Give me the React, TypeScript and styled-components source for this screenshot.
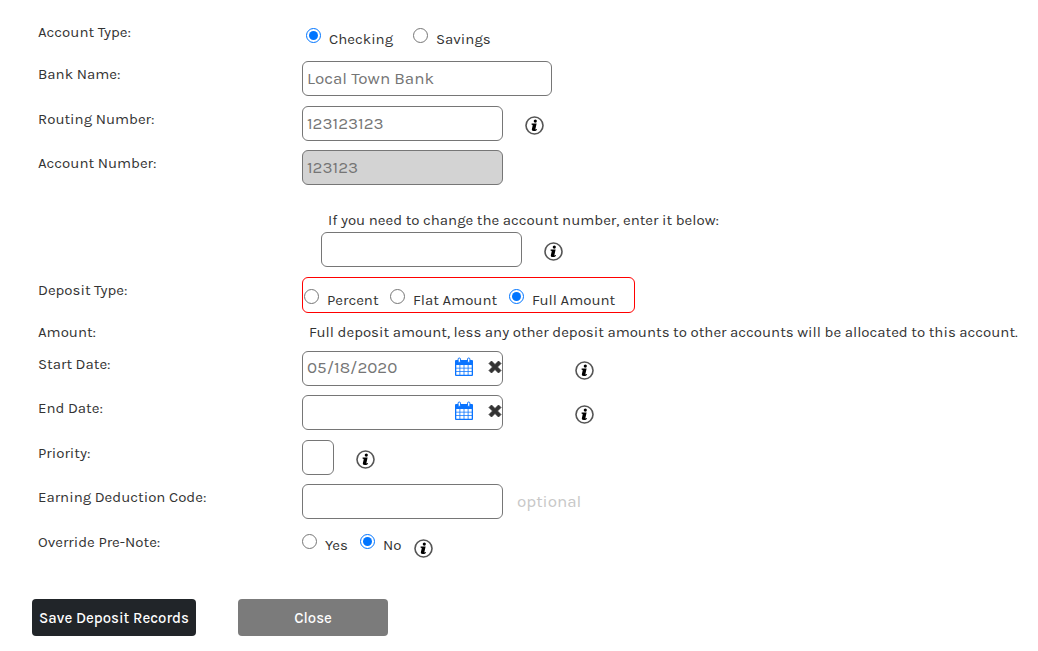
import React from 'react';
import styled, { createGlobalStyle } from 'styled-components';

const GlobalStyle = createGlobalStyle`
  *, *::before, *::after { box-sizing: border-box; }
  body {
    margin: 0;
    background: #fff;
    color: #333;
    font-family: Karla, Inter, "Liberation Sans", sans-serif;
    font-size: 15px;
    line-height: 18px;
  }
  button, input { font-family: inherit; }
`;

const Form = styled.form`
  padding: 19px 16px 15px 32px;
`;

const Row = styled.div<{ $height: number }>`
  display: grid;
  grid-template-columns: 264px minmax(0, 1fr);
  align-items: start;
  min-height: ${({ $height }) => $height}px;
  padding-left: 6px;
`;

const rowLabel = `
  display: block;
  padding-top: 4px;
`;

const Label = styled.label`${rowLabel}`;
const Caption = styled.span`${rowLabel}`;

const Controls = styled.div<{ $gap?: number }>`
  display: flex;
  align-items: flex-start;
  gap: ${({ $gap = 22 }) => $gap}px;
`;

const TextInput = styled.input<{ $width?: number }>`
  width: ${({ $width = 201 }) => $width}px;
  height: 35px;
  padding: 0 4px 2px;
  border: 1px solid #767676;
  border-radius: 6px;
  background: #fff;
  color: #757575;
  font-size: 17px;
  outline: none;

  &:read-only { background: #d3d3d3; }
`;

const DateField = styled.div`
  display: flex;
  align-items: center;
  width: 201px;
  height: 35px;
  padding-bottom: 3px;
  border: 1px solid #767676;
  border-radius: 6px;
  overflow: hidden;
`;

const DateInput = styled.input`
  flex: 1;
  min-width: 0;
  padding: 0 4px;
  border: 0;
  background: transparent;
  color: #757575;
  font-size: 17px;
  outline: none;
`;

const IconButton = styled.button`
  display: block;
  flex: none;
  padding: 0;
  border: 0;
  background: transparent;
  cursor: pointer;

  & + & { margin-left: 14px; }
  svg { display: block; }
`;

const InfoButton = styled(IconButton)`
  margin-top: 9px;
`;

const RadioGroup = styled.div<{ $indent?: number; $top?: number }>`
  display: flex;
  padding: ${({ $top = 9 }) => $top}px 0 0 ${({ $indent = 0 }) => $indent}px;
`;

const DepositGroup = styled(RadioGroup)`
  width: 333px;
  height: 36px;
  border: 1px solid #f00;
  border-radius: 6px;
`;

const RadioLabel = styled.label<{ $width: number }>`
  display: flex;
  gap: 8px;
  width: ${({ $width }) => $width}px;
  white-space: nowrap;
`;

const Radio = styled.input`
  flex: none;
  width: 15px;
  height: 15px;
  margin: 0;
`;

const RadioText = styled.span`
  padding-top: 2px;
`;

const ChangeNumber = styled.div`
  padding: 17px 0 0 19px;
`;

const ChangeLabel = styled.label`
  display: block;
  padding: 0 0 3px 7px;
`;

const Note = styled.p`
  margin: 0;
  padding: 4px 0 0 7px;
`;

const Optional = styled.span`
  padding-top: 8px;
  color: #c8c8c8;
  font-size: 17px;
`;

const Actions = styled.div`
  display: flex;
  gap: 42px;
`;

const ActionButton = styled.button<{ $width: number; $tone: string }>`
  width: ${({ $width }) => $width}px;
  height: 37px;
  padding: 0;
  border: 0;
  border-radius: 4px;
  background: ${({ $tone }) => $tone};
  color: #fff;
  font-size: 15px;
  font-weight: 500;
  white-space: nowrap;
  cursor: pointer;
`;

const Info = ({ topic }: { topic: string }) => (
  <InfoButton type="button" aria-label={`About ${topic}`}>
    <svg width="20" height="20" viewBox="0 0 20 20">
      <circle cx="9.5" cy="10.5" r="8.5" fill="#fff" stroke="#555" strokeWidth="1.6" />
      <circle cx="10.3" cy="6.1" r="1.6" fill="#000" />
      <path d="M6.6 8.6h5l-1.2 5.4c-.1.6.4.5 1.5-.1v1c-1.1.8-2.1 1.2-3.2 1.2-1.6 0-2.1-.7-1.8-2l.8-3.6c.1-.6-.2-.8-1.1-.8z" fill="#000" />
    </svg>
  </InfoButton>
);

const Calendar = () => (
  <svg width="19" height="20" viewBox="0 0 19 20">
    <path d="M1 3h16a1 1 0 0 1 1 1v14a1 1 0 0 1-1 1H1a1 1 0 0 1-1-1V4a1 1 0 0 1 1-1z" fill="#0a74ff" />
    <path d="M1.3 8h3.2v2.7H1.3zM5.3 8h3.3v2.7H5.3zM9.4 8h3.3v2.7H9.4zM13.5 8h3.2v2.7h-3.2zM1.3 11.5h3.2v2.7H1.3zM5.3 11.5h3.3v2.7H5.3zM9.4 11.5h3.3v2.7H9.4zM13.5 11.5h3.2v2.7h-3.2zM1.3 15h3.2v2.7H1.3zM5.3 15h3.3v2.7H5.3zM9.4 15h3.3v2.7H9.4zM13.5 15h3.2v2.7h-3.2z" fill="#fff" />
    <rect x="3.1" y="1" width="2.4" height="4.4" rx="1.2" fill="#fff" stroke="#0a74ff" />
    <rect x="12.5" y="1" width="2.4" height="4.4" rx="1.2" fill="#fff" stroke="#0a74ff" />
  </svg>
);

const Cross = () => (
  <svg width="14" height="14" viewBox="0 0 14 14">
    <path d="M3.5 1 7 4.5 10.5 1 13 3.5 9.5 7l3.5 3.5-2.5 2.5L7 9.5 3.5 13 1 10.5 4.5 7 1 3.5z" fill="#333" stroke="#333" strokeWidth=".8" strokeLinejoin="round" />
  </svg>
);

const DateControl = ({ id, name, value }: { id: string; name: string; value?: string }) => (
  <Controls $gap={72}>
    <DateField>
      <DateInput id={id} type="text" defaultValue={value} />
      <IconButton type="button" aria-label={`Choose ${name}`}><Calendar /></IconButton>
      <IconButton type="button" aria-label={`Clear ${name}`}><Cross /></IconButton>
    </DateField>
    <Info topic={name} />
  </Controls>
);

type OptionProps = { name: string; text: string; width: number; checked?: boolean };

const Option = ({ name, text, width, checked }: OptionProps) => (
  <RadioLabel $width={width}>
    <Radio type="radio" name={name} defaultChecked={checked} />
    <RadioText>{text}</RadioText>
  </RadioLabel>
);

export default function App() {
  return (
    <>
      <GlobalStyle />
      <Form onSubmit={(e) => e.preventDefault()}>
        <Row $height={42}>
          <Caption id="account-type">Account Type:</Caption>
          <RadioGroup $indent={4} role="radiogroup" aria-labelledby="account-type">
            <Option name="accountType" text="Checking" width={107} checked />
            <Option name="accountType" text="Savings" width={90} />
          </RadioGroup>
        </Row>
        <Row $height={45}>
          <Label htmlFor="bank">Bank Name:</Label>
          <Controls><TextInput id="bank" $width={250} defaultValue="Local Town Bank" /></Controls>
        </Row>
        <Row $height={44}>
          <Label htmlFor="routing">Routing Number:</Label>
          <Controls>
            <TextInput id="routing" defaultValue="123123123" />
            <Info topic="routing number" />
          </Controls>
        </Row>
        <Row $height={44}>
          <Label htmlFor="account">Account Number:</Label>
          <Controls><TextInput id="account" value="123123" readOnly /></Controls>
        </Row>
        <Row $height={83}>
          <span />
          <ChangeNumber>
            <ChangeLabel htmlFor="new-account">
              If you need to change the account number, enter it below:
            </ChangeLabel>
            <Controls>
              <TextInput id="new-account" />
              <Info topic="changing the account number" />
            </Controls>
          </ChangeNumber>
        </Row>
        <Row $height={42}>
          <Caption id="deposit-type">Deposit Type:</Caption>
          <DepositGroup $indent={1} $top={11} role="radiogroup" aria-labelledby="deposit-type">
            <Option name="depositType" text="Percent" width={86} />
            <Option name="depositType" text="Flat Amount" width={119} />
            <Option name="depositType" text="Full Amount" width={110} checked />
          </DepositGroup>
        </Row>
        <Row $height={32}>
          <Caption>Amount:</Caption>
          <Note>
            Full deposit amount, less any other deposit amounts to other accounts will be allocated to this account.
          </Note>
        </Row>
        <Row $height={44}>
          <Label htmlFor="start">Start Date:</Label>
          <DateControl id="start" name="start date" value="05/18/2020" />
        </Row>
        <Row $height={45}>
          <Label htmlFor="end">End Date:</Label>
          <DateControl id="end" name="end date" />
        </Row>
        <Row $height={44}>
          <Label htmlFor="priority">Priority:</Label>
          <Controls>
            <TextInput id="priority" $width={32} />
            <Info topic="priority" />
          </Controls>
        </Row>
        <Row $height={45}>
          <Label htmlFor="code">Earning Deduction Code:</Label>
          <Controls $gap={14}>
            <TextInput id="code" />
            <Optional>optional</Optional>
          </Controls>
        </Row>
        <Row $height={70}>
          <Caption id="pre-note">Override Pre-Note:</Caption>
          <Controls $gap={0}>
            <RadioGroup $top={5} role="radiogroup" aria-labelledby="pre-note">
              <Option name="preNote" text="Yes" width={58} />
              <Option name="preNote" text="No" width={54} checked />
            </RadioGroup>
            <Info topic="pre-note override" />
          </Controls>
        </Row>
        <Actions>
          <ActionButton type="submit" $width={164} $tone="#212529">Save Deposit Records</ActionButton>
          <ActionButton type="button" $width={150} $tone="#7b7b7b">Close</ActionButton>
        </Actions>
      </Form>
    </>
  );
}
